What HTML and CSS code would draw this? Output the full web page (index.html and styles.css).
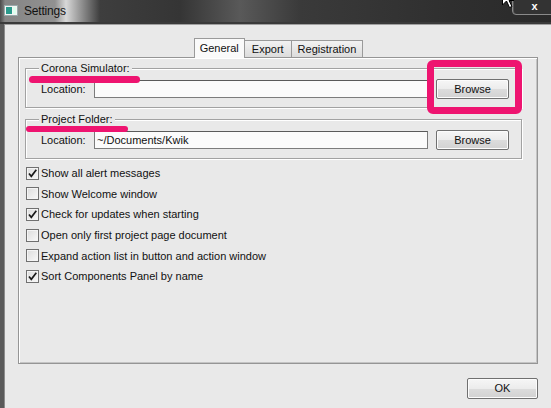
FILE: index.html
```html
<!DOCTYPE html>
<html>
<head>
<meta charset="utf-8">
<link rel="stylesheet" href="styles.css">
</head>
<body>
<div class="window">
  <div class="titlebar">
    <svg class="app-icon" width="14" height="11" viewBox="0 0 14 11">
      <rect x="0.5" y="0.5" width="13" height="10" fill="#f4f4f4" stroke="#9aa"/>
      <rect x="2" y="2" width="6" height="7" fill="#2a9a8c"/>
      <rect x="9" y="2" width="3" height="7" fill="#dfe"/>
    </svg>
    <span class="title">Settings</span>
  </div>
  <div class="close-btn">x</div>
  <svg class="cursor" width="14" height="20" viewBox="0 0 14 20">
    <path d="M0.5 0.5 L0.5 16 L4.5 12 L7.5 18.5 L10 17.5 L7 11.5 L12 11.5 Z" fill="#fff" stroke="#000" stroke-width="1"/>
  </svg>

  <div class="client">
    <div class="tabs">
      <div class="tab active">General</div>
      <div class="tab export">Export</div>
      <div class="tab">Registration</div>
    </div>
    <div class="panel">
      <fieldset class="group">
        <legend>Corona Simulator:</legend>
        <div class="row">
          <span class="label">Location:</span>
          <div class="field"></div>
          <div class="btn">Browse</div>
        </div>
      </fieldset>
      <fieldset class="group second">
        <legend>Project Folder:</legend>
        <div class="row">
          <span class="label">Location:</span>
          <div class="field">~/Documents/Kwik</div>
          <div class="btn">Browse</div>
        </div>
      </fieldset>
      <div class="checks">
        <div class="check"><span class="box on"><svg width="11" height="11" viewBox="0 0 11 11"><path d="M2 5.5 L4.3 8.3 L9.3 1.8" fill="none" stroke="#1a1a1a" stroke-width="1.7"/></svg></span>Show all alert messages</div>
        <div class="check"><span class="box"></span>Show Welcome window</div>
        <div class="check"><span class="box on"><svg width="11" height="11" viewBox="0 0 11 11"><path d="M2 5.5 L4.3 8.3 L9.3 1.8" fill="none" stroke="#1a1a1a" stroke-width="1.7"/></svg></span>Check for updates when starting</div>
        <div class="check"><span class="box"></span>Open only first project page document</div>
        <div class="check"><span class="box"></span>Expand action list in button and action window</div>
        <div class="check"><span class="box on"><svg width="11" height="11" viewBox="0 0 11 11"><path d="M2 5.5 L4.3 8.3 L9.3 1.8" fill="none" stroke="#1a1a1a" stroke-width="1.7"/></svg></span>Sort Components Panel by name</div>
      </div>
    </div>
    <div class="footer">
      <div class="btn ok">OK</div>
    </div>
  </div>

  <div class="mark mark-rect"></div>
  <div class="mark mark-line1"></div>
  <div class="mark mark-line2"></div>
</div>
</body>
</html>
```

FILE: styles.css
```css
* { box-sizing: border-box; }
body {
  margin: 0;
  width: 551px;
  height: 408px;
  overflow: hidden;
  font-family: "Liberation Sans", Arial, sans-serif;
  font-size: 11px;
  color: #111;
}
.window {
  position: relative;
  height: 408px;
  background: #5a5a5a;
  overflow: hidden;
}
.titlebar {
  height: 24px;
  border-bottom: 2px solid #3a3a3a;
  background: linear-gradient(90deg, #4a4a4a 0px, #858585 5px, #919191 55px, #d8d8d8 66px, #a0a0a0 78px, #3e3e3e 100px, #353535 180px, #595959 240px, #3a3a3a 300px, #2f2f2f 450px, #2a2a2a 551px);
  display: flex;
  align-items: center;
  gap: 6px;
  padding: 0 0 1px 4px;
}
.app-icon { display: block; }
.title {
  font-size: 12px;
  letter-spacing: -0.2px;
  color: #111;
}
.close-btn {
  position: absolute;
  top: -1px;
  right: -6px;
  width: 45px;
  height: 16px;
  border: 1px solid #8a8a8a;
  border-radius: 0 0 0 4px;
  box-shadow: inset 1px 0 0 #555;
  background: #333;
  color: #fff;
  font-weight: bold;
  font-size: 11px;
  line-height: 12px;
  text-align: center;
}
.cursor {
  position: absolute;
  left: 502px;
  top: -11px;
}
.client {
  margin-left: 4px;
  height: 384px;
  border-left: 1px solid #8c8c8c;
  border-top: 1px solid #a0a0a0;
  background: #e9e9e9;
  padding: 13px 13px 0 13px;
  display: flex;
  flex-direction: column;
}
.tabs {
  display: flex;
  justify-content: center;
  align-items: flex-end;
  height: 19px;
  position: relative;
  z-index: 1;
  padding-left: 2px;
}
.tab {
  height: 17px;
  line-height: 16px;
  padding: 0 6px;
  border: 1px solid #9a9a9a;
  border-bottom: none;
  background: linear-gradient(#f2f2f2, #dcdcdc);
  margin-left: -1px;
}
.tab.export { padding: 0 7px; }
.tab.active {
  height: 20px;
  line-height: 19px;
  margin-bottom: -1px;
  background: #fafafa;
  padding: 0 5px;
}
.panel {
  height: 307px;
  border: 1px solid #959595;
  box-shadow: inset 1px 1px 0 #fff, inset -1px -1px 0 #c4c4c4;
  background: #e9e9e9;
  padding: 3px 15px 0 6px;
}
.group {
  margin: 0;
  padding: 0 12px 8px 15px;
  border: 1px solid #a2a2a2;
  box-shadow: 1px 1px 0 #fff, inset 1px 1px 0 #fff;
  min-width: 0;
}
.group.second { margin-top: 4px; }
legend {
  padding: 0 2px;
  margin-left: -2px;
  line-height: 14px;
  background: #e9e9e9;
}
.row {
  display: flex;
  align-items: center;
  height: 20px;
  margin-top: 4px;
}
.label { width: 53px; }
.field {
  flex: 1;
  height: 18px;
  border: 1px solid #7c7c7c;
  border-top-color: #5a5a5a;
  background: #fbfbfb;
  padding-left: 2px;
  line-height: 16px;
}
.btn {
  width: 73px;
  height: 20px;
  margin-left: 8px;
  border: 1px solid #707070;
  border-radius: 2px;
  background: linear-gradient(#f6f6f6 0%, #ececec 50%, #dcdcdc 51%, #d2d2d2 100%);
  box-shadow: inset 0 0 0 1px #fcfcfc;
  text-align: center;
  line-height: 18px;
}
.checks {
  margin-top: 4px;
  padding-left: 1px;
}
.check {
  display: flex;
  align-items: center;
  height: 20.6px;
}
.box {
  width: 13px;
  height: 13px;
  border: 1px solid #707070;
  background: linear-gradient(135deg, #dcdcdc, #f8f8f8);
  box-shadow: inset 0 0 0 1px #f4f4f4;
  margin-right: 2px;
  display: flex;
  align-items: center;
  justify-content: center;
}
.box svg { display: block; }
.footer {
  display: flex;
  justify-content: flex-end;
  margin-top: 14px;
}
.btn.ok {
  width: 71px;
  height: 21px;
  margin-left: 0;
  line-height: 19px;
}
.mark {
  position: absolute;
  background: #ee1470;
  border-radius: 4px;
}
.mark-rect {
  left: 427px;
  top: 60px;
  width: 95px;
  height: 54px;
  background: transparent;
  border: 7px solid #ee1470;
  border-radius: 6px;
}
.mark-line1 {
  left: 29px;
  top: 76px;
  width: 111px;
  height: 7px;
}
.mark-line2 {
  left: 26px;
  top: 126px;
  width: 102px;
  height: 6px;
}
```
